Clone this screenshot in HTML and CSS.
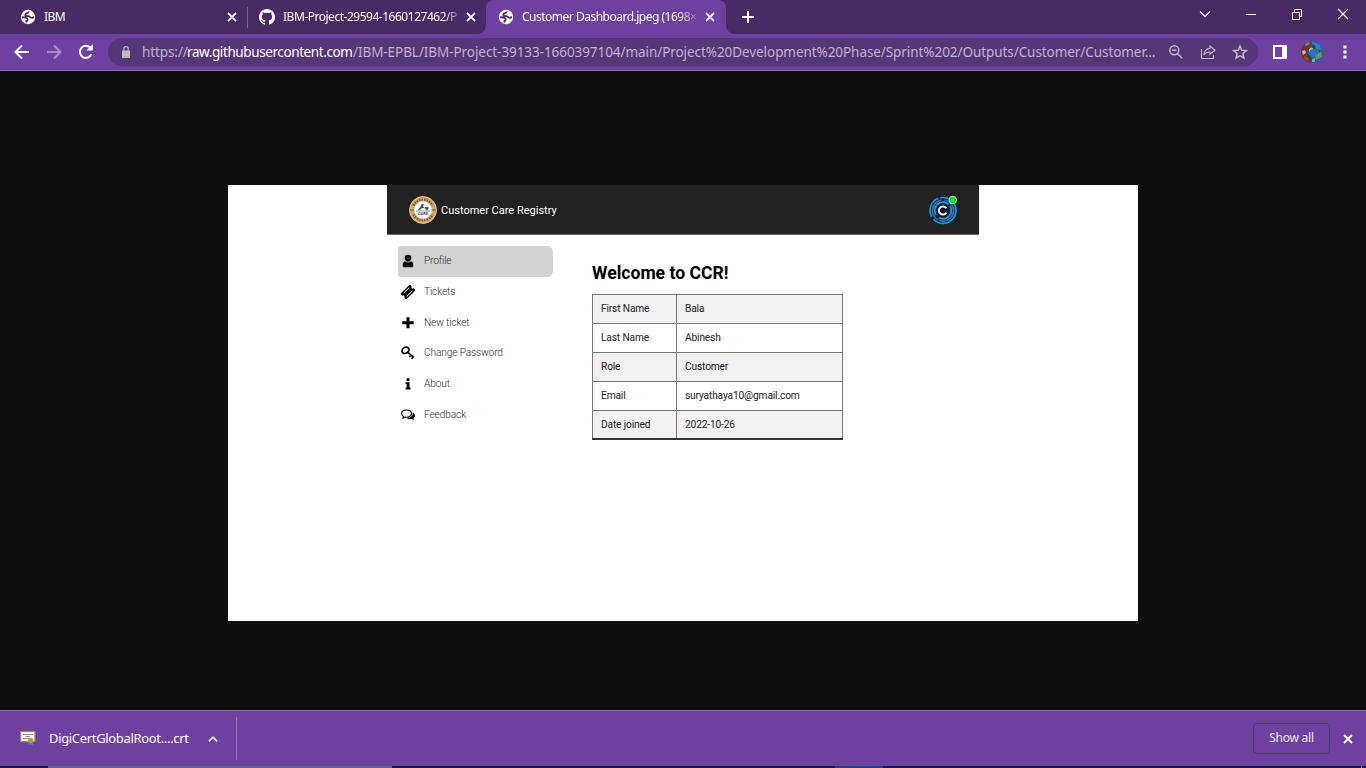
FILE: index.html
```html
<!DOCTYPE html>
<html lang="en">
<head>
<meta charset="utf-8">
<title>Customer Dashboard.jpeg</title>
<link rel="stylesheet" href="styles.css">
</head>
<body>
<svg class="defs" width="0" height="0">
  <symbol id="globe" viewBox="0 0 16 16"><circle cx="8" cy="8" r="7.200" fill="#fff"/><path class="globe-land" d="M8.800 2.500C8.600 4.500 5.500 3.800 5.300 5.500c-.2 1.700 1.500 1.500 3 1.600 1.800.2 1.500 1.700 3.200 1.700 1.300 0 1.800-.7 2.500-.7M2 8.300c2.200-.2 4.500.2 5.300 1.200.8 1 .1 2.200-1 2.600l.3 1.500"/></symbol>
  <symbol id="close" viewBox="0 0 10 10"><path d="M1 1l8 8M9 1L1 9" fill="none" stroke="currentColor" stroke-width="1.800"/></symbol>
</svg>
<div class="browser">
  <header class="tabs">
    <div class="tab tab-one">
      <svg class="favicon"><use href="#globe"/></svg>
      <span class="tab-title t1">IBM</span>
      <svg class="tab-close"><use href="#close"/></svg>
    </div>
    <div class="tab tab-two">
      <svg class="favicon" viewBox="0 0 16 16"><path fill="#fff" d="M8 0C3.580 0 0 3.580 0 8c0 3.540 2.290 6.530 5.470 7.590.4.070.55-.17.55-.38 0-.19-.01-.82-.01-1.490-2.010.37-2.530-.49-2.690-.94-.09-.23-.48-.94-.82-1.130-.28-.15-.68-.52-.01-.53.63-.01 1.080.58 1.230.82.72 1.210 1.870.87 2.330.66.07-.52.28-.87.51-1.070-1.780-.2-3.640-.89-3.640-3.950 0-.87.31-1.590.82-2.150-.08-.2-.36-1.020.08-2.120 0 0 .67-.21 2.200.82.64-.18 1.320-.27 2-.27s1.360.09 2 .27c1.530-1.040 2.200-.82 2.200-.82.44 1.100.16 1.920.08 2.120.51.56.82 1.270.82 2.150 0 3.070-1.870 3.750-3.650 3.950.29.25.54.73.54 1.480 0 1.070-.01 1.930-.01 2.200 0 .21.150.46.550.38A8.010 8.010 0 0 0 16 8c0-4.420-3.580-8-8-8z"/></svg>
      <span class="tab-title t2">IBM-Project-29594-1660127462/P</span>
      <svg class="tab-close"><use href="#close"/></svg>
    </div>
    <div class="tab tab-active">
      <svg class="favicon"><use href="#globe"/></svg>
      <span class="tab-title t3">Customer Dashboard.jpeg (1698×</span>
      <svg class="tab-close"><use href="#close"/></svg>
    </div>
    <svg class="new-tab" viewBox="0 0 12 12"><path d="M6 0v12M0 6h12" stroke="#fff" stroke-width="2"/></svg>
    <div class="window-buttons">
      <svg width="12" height="12" viewBox="0 0 12 12"><path d="M1 3.500l5 5 5-5"/></svg>
      <svg width="12" height="12" viewBox="0 0 12 12"><path d="M1 6.500h10" class="crisp"/></svg>
      <svg width="12" height="12" viewBox="0 0 12 12"><path d="M1.500 4.500h7v7h-7zM3.500 4.500v-3h7v7h-2" class="crisp"/></svg>
      <svg width="12" height="12" viewBox="0 0 12 12"><path d="M1 1l10 10M11 1L1 11"/></svg>
    </div>
  </header>
  <nav class="toolbar">
    <svg class="nav back" viewBox="0 0 16 16"><path d="M15 8H2M8 1.500L1.500 8 8 14.500"/></svg>
    <svg class="nav forward" viewBox="0 0 16 16"><path d="M1 8h13M8 1.500L14.500 8 8 14.500"/></svg>
    <svg class="nav reload" viewBox="0 0 16 16"><path d="M13.500 10A6 6 0 1 1 12.300 3.800"/><path d="M14.800 0v6.500H8.500z" class="solid"/></svg>
    <div class="omnibox">
      <svg class="lock" viewBox="0 0 10 12"><rect x="1" y="4.500" width="8" height="7.500" rx=".7" fill="#bdbdc1"/><path d="M2.800 5V2.800a2.200 2.200 0 0 1 4.400 0V5" fill="none" stroke="#bdbdc1" stroke-width="1.200"/></svg>
      <div class="url"><span class="u1">https://</span><span class="u2">raw.githubusercontent.com</span><span class="u3">/IBM-EPBL/IBM-Project-39133-1660397104/main/Project%20Development%20Phase/Sprint%202/Outputs/Customer/Customer...</span></div>
      <div class="actions">
        <svg viewBox="0 0 16 16"><circle cx="6.300" cy="6.300" r="4.500"/><path d="M4 6.300h4.600M9.700 9.700l4.500 4.500"/></svg>
        <svg viewBox="0 0 16 16"><path d="M1.500 5v9.500h12V11" stroke-width="1.200"/><path d="M10 2l5 4.200-5 4V8c-3 0-4.600.8-6 3 .3-4 2.200-6.400 6-6.600z" stroke-width="1.200"/></svg>
        <svg viewBox="0 0 16 16"><path d="M8 2l1.800 4.200 4.600.4-3.500 3 1.100 4.500L8 11.700l-4 2.400 1.100-4.500-3.500-3 4.600-.4z"/></svg>
      </div>
    </div>
    <svg class="panel" viewBox="0 0 14 14"><path fill="#fff" fill-rule="evenodd" d="M0 0h14v14H0zM2 2v10h7V2z"/></svg>
    <svg class="avatar" viewBox="0 0 22 22"><clipPath id="av"><circle cx="11" cy="11" r="11"/></clipPath><g clip-path="url(#av)"><path fill="#265b9e" d="M0 0h22v22H0z"/><path fill="#812d27" d="M0 6L9 0l3 3-6 4 1 8 5 3-3 4-9-5z"/><path fill="#1687e5" d="M11 0l8 4 2 8-4 1-2-6-4-3z"/><path fill="#64984c" d="M14 14l6-3 1 5-6 3zM5 2l4-1-1 3-4 1z"/><path fill="#d2b599" d="M1 10l3-1 1 3-3 2zM8 8l3-2 1 2-4 3z"/><path fill="#1c78d0" d="M9 9l5-1 2 5-4 4-4-3z"/><path fill="#44462d" d="M7 13l4 4-3 2-4-3zM12 3l3 3-2 2-3-2z"/><path fill="#a85125" d="M3 15l4 2 1 3-4-2zM15 7l3 2-2 3z"/><path fill="#44462d" d="M17 8l3 2-2 2zM6 6l3 1-2 3z"/><path fill="#45b3e5" d="M11 18l3-1v4h-3z"/></g></svg>
    <svg class="kebab" viewBox="0 0 4 14"><path fill="#fff" d="M.5.500h3v3h-3zM.5 5.500h3v3h-3zM.5 10.500h3v3h-3z"/></svg>
  </nav>
  <main class="viewport">
    <div class="sheet">
      <div class="app">
        <div class="app-bar">
          <svg class="logo" viewBox="0 0 28 28"><circle cx="14" cy="14" r="13.500" fill="#dfa650" stroke="#d6d3c4" stroke-width=".8"/><path d="M4.500 9.500a10.800 10.800 0 0 1 19 0M4.500 18.500a10.800 10.800 0 0 0 19 0" fill="none" stroke="#4c4128" stroke-width="2.600" stroke-dasharray="1.500 1" stroke-opacity=".75"/><circle cx="14" cy="14" r="8.900" fill="#fff" stroke="#c8d1c5" stroke-width=".8"/><path d="M1 14h4M23 14h4" stroke="#59635a" stroke-width="1"/><path d="M13 8l1.500.5-.8 1.800 1.800 1.700-2.800-.3-1.500 1.800-2.200.3 2.700-2.800zM7 15h14M16 11.500h3.500l-.8 2h-2" fill="#304e50" stroke="#304e50" stroke-width=".6"/><text x="14" y="19.200" class="logo-text">CARE</text></svg>
          <span class="brand">Customer Care Registry</span>
          <svg class="user-logo" viewBox="0 0 30 30"><circle cx="15" cy="15.500" r="14" fill="#10233c"/><g fill="none" stroke-width="1.700"><circle cx="15" cy="15.500" r="13" stroke="#1995ce" stroke-dasharray="31 3 22 2 12 4"/><circle cx="15" cy="15.500" r="10.600" stroke="#2474ba" stroke-dasharray="20 2 26 3"/><circle cx="15" cy="15.500" r="8.300" stroke="#17a4d3" stroke-dasharray="17 4 24 2"/></g><circle cx="15" cy="15.500" r="6.700" fill="#12142c"/><path d="M18.400 13.300a4.100 4.100 0 1 0 0 4.400" fill="none" stroke="#f5f6fa" stroke-width="2"/><circle cx="24.800" cy="5" r="3.800" fill="#00ef00" stroke="#e5f4e2" stroke-width=".8"/></svg>
        </div>
        <div class="app-body">
          <ul class="menu">
            <li class="selected"><svg viewBox="0 0 14 14"><path d="M7 .8a3.300 3.300 0 0 1 3.300 3.300c0 1.900-1.500 3.700-3.300 3.700S3.700 6 3.700 4.100A3.300 3.300 0 0 1 7 .8zM4 7.200c1.900 1.700 4.100 1.700 6 0 1.800.3 2.300 2.200 2.300 4.200 0 1.200-.8 1.900-1.800 1.900h-7c-1 0-1.800-.7-1.800-1.900 0-2 .5-3.900 2.300-4.200z"/></svg><span>Profile</span></li>
            <li><svg viewBox="0 0 14 14"><g transform="rotate(-45 7 7)"><path fill-rule="evenodd" d="M.3 3h13.400v2.600a1.400 1.400 0 0 0 0 2.800V11H.3V8.400a1.400 1.400 0 0 0 0-2.800zM3 4.400v.8h8v-.8zM3 8.800v.8h8v-.8z"/></g></svg><span>Tickets</span></li>
            <li><svg viewBox="0 0 14 14"><path d="M5.500 1.300h3v4h4.200v3H8.500v4h-3v-4H1.300v-3h4.200z"/></svg><span>New ticket</span></li>
            <li><svg viewBox="0 0 14 14"><g fill="none" stroke="#000" stroke-width="1.700"><ellipse cx="4.500" cy="4.300" rx="3.700" ry="2.900" transform="rotate(-35 4.500 4.300)"/><path d="M6.400 6.100l6.400 5.200M8.200 11l2.300-2.500M10.600 12.800l2-2.200"/></g></svg><span>Change Password</span></li>
            <li><svg viewBox="0 0 14 14"><path d="M5.600 1.200h2.900V4H5.600zM4.600 5.200h3.900v5.400h1v2H4.600v-2h1V7.100h-1z"/></svg><span>About</span></li>
            <li><svg viewBox="0 0 14 14"><path d="M5.500 2C2.700 2 .6 3.500.6 5.600c0 1.200.7 2.200 1.900 2.800L2 10.300l2.400-1.200c3.300.5 6-1.100 6-3.500C10.400 3.500 8.300 2 5.500 2z" fill="none" stroke="#000" stroke-width="1.100"/><path d="M11.700 4.200c2.800 1.500 2.800 4.600.6 6l1.200 2.100-2.900-1.300c-2.300.4-3.600 0-4.800-.8 3.800-.1 6.400-2.200 5.900-6z"/></svg><span>Feedback</span></li>
          </ul>
          <section class="content">
            <h1>Welcome to CCR!</h1>
            <table>
              <tr><td>First Name</td><td>Bala</td></tr>
              <tr><td>Last Name</td><td>Abinesh</td></tr>
              <tr><td>Role</td><td>Customer</td></tr>
              <tr><td>Email</td><td>suryathaya10@gmail.com</td></tr>
              <tr><td>Date joined</td><td>2022-10-26</td></tr>
            </table>
          </section>
        </div>
      </div>
    </div>
  </main>
  <footer class="downloads">
    <div class="download">
      <svg class="cert" viewBox="0 0 16 15"><path fill="#fff" stroke="#9c8a65" stroke-width="1.200" d="M.6.600h14.300v10H.6z"/><path d="M3 3.500h10M5.500 5.500H10M3 7.500h6" stroke="#7c84b0"/><path fill="#2484e8" d="M8.500 10h2v4h-2zM11 10h2v4h-2z"/><circle cx="10.700" cy="9.500" r="2.700" fill="#d8940b"/></svg>
      <span class="file">DigiCertGlobalRoot....crt</span>
      <svg class="caret" viewBox="0 0 10 6"><path d="M.8 5.300L5 1.200l4.200 4.100" fill="none" stroke="#eee6f5" stroke-width="1.700"/></svg>
    </div>
    <button class="show-all"><span>Show all</span></button>
    <svg class="bar-close"><use href="#close"/></svg>
  </footer>
  <div class="taskbar"><i class="running"></i><i class="current"></i><i class="peek"></i></div>
</div>
</body>
</html>
```

FILE: styles.css
```css
* { box-sizing: border-box; }
body { margin: 0; overflow: hidden; font-family: "Noto Sans", sans-serif; color: #fff; }
svg { display: block; flex: none; }
.defs { position: absolute; }
.browser { width: 1366px; height: 768px; display: flex; flex-direction: column; background: #0e0e0e; }
.tabs { height: 34px; flex: none; display: flex; background: #472a66; }
.tab { display: flex; align-items: center; height: 34px; font-size: 12px; }
.favicon { width: 16px; height: 16px; }
.globe-land { fill: none; stroke: #472a66; stroke-width: 1.8; }
.tab-title { white-space: nowrap; line-height: 34px; }
.tab-close { width: 10px; height: 10px; color: #f1ebf6; }
.tab-one { width: 248px; padding: 0 10px 0 20px; border-right: 1px solid transparent; border-image: linear-gradient(transparent 8px, #79629a 8px, #79629a 27px, transparent 27px) 1; }
.tab-one .tab-close { margin-left: auto; }
.tab-title.t1 { margin-left: 8px; letter-spacing: -.5px; }
.tab-two { width: 238px; padding: 0 10px 0 11px; }
.tab-title.t2 { margin-left: 8px; width: 177px; margin-right: auto; letter-spacing: -.48px; mask-image: linear-gradient(90deg, #000 160px, transparent 182px); }
.tab-active { width: 240px; padding: 0 11px 0 12px; background: #6e41a1; border-radius: 8px 8px 0 0; position: relative; }
.tab-active::before, .tab-active::after { content: ""; position: absolute; bottom: 0; width: 8px; height: 8px; }
.tab-active::before { left: -8px; background: radial-gradient(circle at 0 0, transparent 7.5px, #6e41a1 8px); }
.tab-active::after { right: -8px; background: radial-gradient(circle at 100% 0, transparent 7.5px, #6e41a1 8px); }
.tab-title.t3 { margin-left: 8px; width: 177px; margin-right: auto; letter-spacing: -.5px; mask-image: linear-gradient(90deg, #000 152px, transparent 182px); }
.new-tab { width: 12px; height: 12px; margin: 11px 0 0 16px; }
.window-buttons { margin: 8px 17px 0 auto; display: flex; gap: 34px; }
.window-buttons path { fill: none; stroke: #fff; stroke-width: 1.1; }
.window-buttons .crisp { stroke-width: 1; }
.toolbar { height: 37px; flex: none; background: #6e41a1; border-bottom: 1px solid #9270b8; display: flex; align-items: center; padding-left: 14px; }
.nav { width: 16px; height: 16px; margin-right: 16px; fill: none; stroke: #fff; stroke-width: 2; }
.nav.forward { stroke: #a88bc7; }
.nav .solid { fill: #fff; stroke: none; }
.nav.reload { margin-right: 14px; }
.omnibox { width: 1150px; height: 28px; border-radius: 14px; background: #563678; display: flex; align-items: center; padding: 0 10px 0 13px; }
.lock { width: 10px; height: 12px; margin-right: 11px; }
.url { width: 1020px; white-space: nowrap; font-size: 13.5px; line-height: 26px; display: flex; color: #c0b1cf; }
.u1 { width: 45px; letter-spacing: -.1px; }
.u2 { width: 166px; letter-spacing: -.4px; color: #fff; }
.u3 { letter-spacing: -.068px; }
.actions { display: flex; gap: 16px; margin-left: auto; }
.actions svg { width: 16px; height: 16px; fill: none; stroke: #bdb6c4; stroke-width: 1.5; }
.panel { width: 14px; height: 14px; margin-left: 15px; }
.avatar { width: 22px; height: 22px; margin-left: 14px; }
.kebab { width: 4px; height: 14px; margin-left: 20px; }
.viewport { height: 639px; flex: none; padding: 114px 0 0 228px; }
.sheet { width: 910px; height: 436px; background: #fff; padding-left: 159px; }
.app { width: 592px; font-family: Roboto, sans-serif; }
.app-bar { height: 50px; background: #212121; border-bottom: 1px solid #686868; display: flex; align-items: center; padding: 0 21px 0 22px; }
.logo { width: 28px; height: 28px; }
.logo-text { font: 700 4px Roboto, sans-serif; fill: #304e50; text-anchor: middle; }
.brand { font-size: 11px; margin-left: 4px; padding-top: 1px; }
.user-logo { width: 30px; height: 30px; margin-left: auto; }
.app-body { display: flex; padding: 11px 0 0 11px; }
.menu { list-style: none; margin: 0; padding: 0; width: 155px; }
.menu li { height: 30.7px; display: flex; align-items: center; gap: 9px; padding-left: 3px; font-size: 10.2px; letter-spacing: -.15px; font-weight: 300; color: #293129; }
.menu span { padding-bottom: 1px; }
.menu svg { width: 14px; height: 14px; fill: #000; }
.menu .selected { background: #d2d2d2; border-radius: 3px 6px 6px 3px; }
.content { margin-left: 39px; color: #222; }
h1 { margin: 16px 0 10px; font-size: 17.6px; line-height: 22px; font-weight: 700; color: #000; }
table { border-collapse: collapse; width: 251px; font-size: 10.2px; letter-spacing: -.15px; table-layout: fixed; border-bottom: 2px solid #333; }
td { height: 28.9px; border: 1px solid #777; padding: 0 8px; }
td:first-child { width: 84px; }
tr:nth-child(odd) { background: #f1f1f1; }
.downloads { height: 56px; flex: none; background: #6e41a1; border-top: 1px solid #9270b8; display: flex; align-items: center; padding-right: 13px; }
.download { width: 237px; height: 43px; border-right: 1px solid #9a7abd; display: flex; align-items: center; padding-left: 20px; }
.cert { width: 16px; height: 15px; }
.file { font-size: 13px; letter-spacing: -.33px; margin-left: 13px; width: 141px; white-space: nowrap; padding-bottom: 1px; }
.caret { width: 10px; height: 6px; margin-left: 18px; }
.show-all { width: 77px; height: 31px; margin: 0 13px 0 auto; border: 1px solid #47404f; border-radius: 4px; background: none; color: #eee5f8; font: 12px "Noto Sans", sans-serif; letter-spacing: -.25px; padding: 0 0 2px; }
.bar-close { width: 10px; height: 10px; color: #fff; }
.taskbar { height: 2px; flex: none; background: #101d32; display: flex; }
.taskbar i { height: 2px; }
.running { width: 344px; margin-left: 48px; background: #596b7b; }
.current { width: 48px; margin-left: 443px; background: #084779; }
.peek { width: 1px; margin: 0 4px 0 auto; background: #667080; }
```
